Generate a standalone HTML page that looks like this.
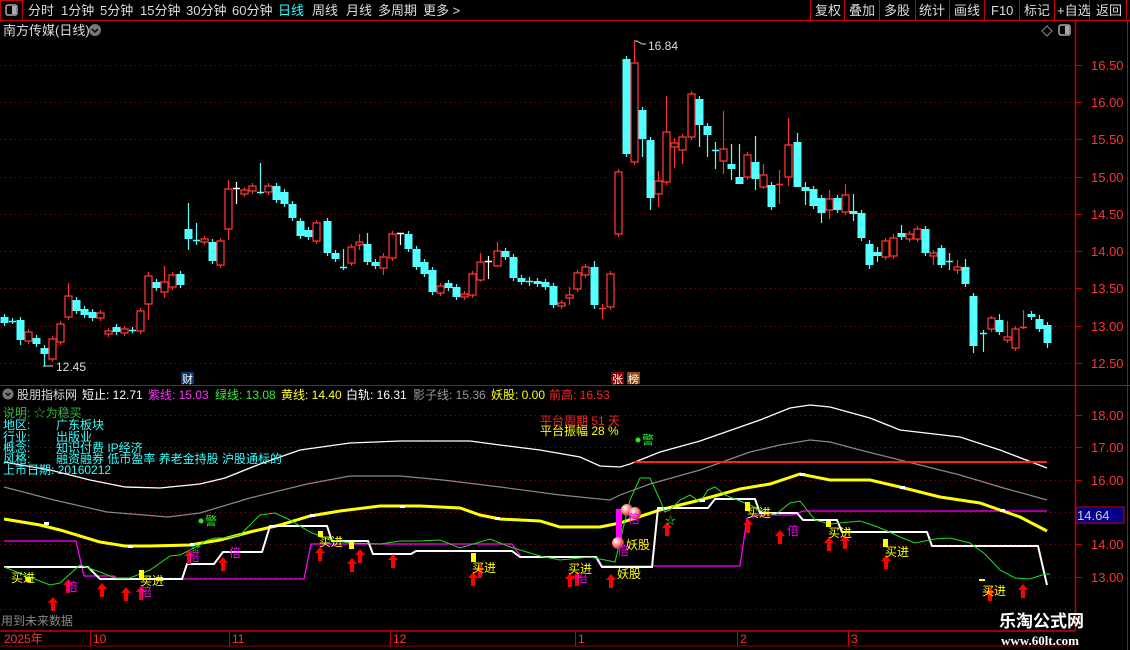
<!DOCTYPE html>
<html><head><meta charset="utf-8">
<style>
html,body{margin:0;padding:0;background:#000;width:1130px;height:650px;overflow:hidden}
body{font-family:"Liberation Sans","Noto Sans CJK SC",sans-serif;font-size:12px;position:relative}
.t{position:absolute;white-space:nowrap;line-height:13px}
svg{position:absolute;left:0;top:0}
</style></head><body>
<svg width="1130" height="650" xmlns="http://www.w3.org/2000/svg" font-family="Liberation Sans, Noto Sans CJK SC, sans-serif">
<!-- top bar -->
<line x1="0" y1="20.5" x2="1130" y2="20.5" stroke="#c00" />
<rect x="0.5" y="0.5" width="22" height="20" fill="none" stroke="#c00"/>
<rect x="6" y="5" width="11" height="10" rx="2" fill="none" stroke="#aaa" stroke-width="1.5"/><rect x="12" y="6" width="4" height="8" fill="#aaa"/>
<g stroke="#c00"><line x1="810.5" y1="0" x2="810.5" y2="20"/><line x1="844.5" y1="0" x2="844.5" y2="20"/><line x1="879.5" y1="0" x2="879.5" y2="20"/><line x1="915.5" y1="0" x2="915.5" y2="20"/><line x1="949.5" y1="0" x2="949.5" y2="20"/><line x1="984.5" y1="0" x2="984.5" y2="20"/><line x1="1019.5" y1="0" x2="1019.5" y2="20"/><line x1="1054.5" y1="0" x2="1054.5" y2="20"/><line x1="1089.5" y1="0" x2="1089.5" y2="20"/><line x1="1126.5" y1="0" x2="1126.5" y2="20"/></g>
<g font-size="13" fill="#ddd">
<text x="28" y="15">分时</text><text x="61" y="15">1分钟</text><text x="100" y="15">5分钟</text><text x="140" y="15">15分钟</text><text x="186" y="15">30分钟</text><text x="232" y="15">60分钟</text><text x="278" y="15" fill="#3ff">日线</text><text x="312" y="15">周线</text><text x="346" y="15">月线</text><text x="378" y="15">多周期</text><text x="423" y="15">更多 &gt;</text>
<text x="815" y="15">复权</text><text x="849" y="15">叠加</text><text x="884" y="15">多股</text><text x="919" y="15">统计</text><text x="954" y="15">画线</text><text x="991" y="15">F10</text><text x="1024" y="15">标记</text><text x="1057" y="15">+自选</text><text x="1096" y="15">返回</text>
<text x="3" y="35">南方传媒(日线)</text></g>
<circle cx="95" cy="30" r="6" fill="#777"/><path d="M92 29l3 3 3-3" stroke="#000" stroke-width="1.5" fill="none"/>
<path d="M1047 26l5 5-5 5-5-5z" fill="none" stroke="#888"/>
<rect x="1059" y="25" width="11" height="10" rx="2" fill="none" stroke="#aaa" stroke-width="1.5"/><rect x="1065" y="26" width="4" height="8" fill="#aaa"/>
<!-- axis -->
<line x1="1075.5" y1="20" x2="1075.5" y2="631" stroke="#c00" stroke-width="1.5"/>
<line x1="1127.5" y1="20" x2="1127.5" y2="650" stroke="#c00"/>
<line x1="0" y1="385.5" x2="1130" y2="385.5" stroke="#c00"/>
<g stroke="#900" stroke-dasharray="1 4">
<line x1="0" y1="65.5" x2="1075" y2="65.5"/><line x1="0" y1="102.5" x2="1075" y2="102.5"/><line x1="0" y1="139.5" x2="1075" y2="139.5"/><line x1="0" y1="177.5" x2="1075" y2="177.5"/><line x1="0" y1="214.5" x2="1075" y2="214.5"/><line x1="0" y1="251.5" x2="1075" y2="251.5"/><line x1="0" y1="288.5" x2="1075" y2="288.5"/><line x1="0" y1="326.5" x2="1075" y2="326.5"/><line x1="0" y1="363.5" x2="1075" y2="363.5"/>
<line x1="0" y1="415.5" x2="1075" y2="415.5"/><line x1="0" y1="447.5" x2="1075" y2="447.5"/><line x1="0" y1="480.5" x2="1075" y2="480.5"/><line x1="0" y1="512.5" x2="1075" y2="512.5"/><line x1="0" y1="544.5" x2="1075" y2="544.5"/><line x1="0" y1="577.5" x2="1075" y2="577.5"/><line x1="0" y1="609.5" x2="1075" y2="609.5"/>
</g>
<g stroke="#c00"><line x1="1075" y1="65.5" x2="1082" y2="65.5"/><line x1="1075" y1="102.5" x2="1082" y2="102.5"/><line x1="1075" y1="139.5" x2="1082" y2="139.5"/><line x1="1075" y1="177.5" x2="1082" y2="177.5"/><line x1="1075" y1="214.5" x2="1082" y2="214.5"/><line x1="1075" y1="251.5" x2="1082" y2="251.5"/><line x1="1075" y1="288.5" x2="1082" y2="288.5"/><line x1="1075" y1="326.5" x2="1082" y2="326.5"/><line x1="1075" y1="363.5" x2="1082" y2="363.5"/><line x1="1075" y1="415.5" x2="1082" y2="415.5"/><line x1="1075" y1="447.5" x2="1082" y2="447.5"/><line x1="1075" y1="480.5" x2="1082" y2="480.5"/><line x1="1075" y1="544.5" x2="1082" y2="544.5"/><line x1="1075" y1="577.5" x2="1082" y2="577.5"/></g>
<g fill="#f33" font-size="13">
<text x="1091" y="70">16.50</text><text x="1091" y="107">16.00</text><text x="1091" y="144">15.50</text><text x="1091" y="182">15.00</text><text x="1091" y="219">14.50</text><text x="1091" y="256">14.00</text><text x="1091" y="293">13.50</text><text x="1091" y="331">13.00</text><text x="1091" y="368">12.50</text>
<text x="1091" y="420">18.00</text><text x="1091" y="452">17.00</text><text x="1091" y="485">16.00</text><text x="1091" y="549">14.00</text><text x="1091" y="582">13.00</text></g>
<rect x="1076" y="507" width="48" height="16" fill="#00008b" stroke="#c00"/>
<text x="1077" y="520" fill="#ccc" font-size="13">14.64</text>
<g id="candles"></g>
<g fill="#ddd" font-size="12"><text x="648" y="50">16.84</text><text x="56" y="371">12.45</text></g>
<path d="M634 41h3l5 3h4M43 366h10" stroke="#ddd" fill="none"/>
<rect x="181" y="372" width="13" height="12" fill="#0a3a6a"/><text x="182" y="383" fill="#fff" font-size="11">财</text>
<rect x="611" y="372" width="13" height="12" fill="#800"/><text x="612" y="383" fill="#fff" font-size="11">张</text>
<rect x="627" y="372" width="13" height="12" fill="#8a4a10"/><text x="628" y="383" fill="#fff" font-size="11">榜</text>
<!-- indicator lines -->
<polyline fill="none" stroke="#fff" stroke-width="1.3" points="4,462 50,470 90,480 125,487 160,488 200,484 225,478 260,464 300,450 350,443 400,441 470,441 500,445 540,450 580,457 600,466 620,467 630,464 660,452 700,441 760,420 790,408 810,405 830,407 870,418 900,430 960,437 1000,450 1047,468"/>
<polyline fill="none" stroke="#888" stroke-width="1.2" points="4,487 54,500 107,512 168,517 200,513 250,498 307,484 350,476 400,476 443,480 500,487 560,495 610,500 620,495 650,484 700,470 750,452 780,445 810,440 830,442 860,450 900,460 960,475 1000,487 1047,500"/>
<line x1="634" y1="462" x2="1047" y2="462" stroke="#f22" stroke-width="2"/>
<polyline fill="none" stroke="#f0f" stroke-width="1.3" points="4,541 76,541 84,576 114,576 118,579 304,579 311,544 368,544 512,544 521,557 597,557 602,566 740,566 747,518 760,515 793,515 803,511 1047,511"/>
<polyline fill="none" stroke="#ff0" stroke-width="3" points="4,519 40,525 60,530 100,542 125,546 150,546 190,545 220,540 250,532 280,525 310,516 340,511 380,506 420,506 460,508 480,515 500,519 540,521 560,527 600,527 620,523 660,510 700,500 740,489 770,484 800,474 830,480 870,480 900,487 940,497 980,503 1000,510 1020,517 1047,531"/>
<polyline fill="none" stroke="#fff" stroke-width="2" points="4,567 82,567 88,567 100,579 182,579 187,564 214,564 223,552 262,552 270,526 327,526 332,541 368,541 373,554 411,554 416,551 512,551 520,557 596,557 602,567 652,567 658,508 708,508 715,499 755,499 760,513 797,513 803,520 837,520 842,532 927,532 932,546 1038,546 1047,585"/>
<polyline fill="none" stroke="#2d2" stroke-width="1" points="4,567 50,585 60,583 80,565 100,572 115,578 130,578 150,570 170,556 180,555 200,545 205,541 215,538 225,538 240,535 260,515 275,513 290,520 310,532 330,540 350,543 380,544 400,541 420,541 440,540 460,548 490,539 510,547 540,556 560,560 590,557 615,562 630,500 640,478 650,478 660,500 665,512 670,510 680,500 690,495 700,502 708,490 715,487 725,495 735,499 750,505 760,510 775,515 790,503 800,501 815,520 830,524 860,521 875,526 885,530 900,537 915,543 935,539 950,538 970,543 985,554 1000,570 1015,578 1030,579 1045,574 1050,574"/>
<g fill="#fff"><rect x="44" y="522" width="5" height="3"/><rect x="128" y="545" width="5" height="3"/><rect x="190" y="543" width="5" height="3"/><rect x="310" y="514" width="5" height="3"/><rect x="400" y="505" width="5" height="3"/><rect x="495" y="517" width="5" height="3"/><rect x="700" y="499" width="5" height="3"/><rect x="800" y="473" width="5" height="3"/><rect x="900" y="486" width="5" height="3"/><rect x="1000" y="509" width="5" height="3"/></g>
<g fill="#ff0"><rect x="139" y="570" width="5" height="9"/><rect x="26" y="577" width="5" height="5"/><rect x="318" y="531" width="5" height="6"/><rect x="349" y="542" width="5" height="7"/><rect x="471" y="553" width="5" height="9"/><rect x="745" y="502" width="5" height="9"/><rect x="826" y="521" width="5" height="6"/><rect x="883" y="539" width="5" height="8"/><rect x="979" y="579" width="6" height="2"/></g>
<rect x="616" y="509" width="6" height="30" fill="#f0f"/>
<defs><radialGradient id="b" cx="0.35" cy="0.35" r="0.7"><stop offset="0" stop-color="#fff"/><stop offset="0.5" stop-color="#f88"/><stop offset="1" stop-color="#a22"/></radialGradient></defs>
<circle cx="627" cy="510" r="6" fill="url(#b)"/><circle cx="635" cy="513" r="6" fill="url(#b)"/><circle cx="618" cy="543" r="6" fill="url(#b)"/>
<g id="arrows" fill="#f00"></g>
<g font-size="12">
<g fill="#ff0"><text x="11" y="582">买进</text><text x="140" y="585">买进</text><text x="319" y="546">买进</text><text x="472" y="572">买进</text><text x="568" y="573">买进</text><text x="747" y="517">买进</text><text x="828" y="537">买进</text><text x="885" y="556">买进</text><text x="982" y="595">买进</text><text x="617" y="578">妖股</text><text x="626" y="549">妖股</text></g>
<g fill="#f0f"><text x="66" y="591">倍</text><text x="140" y="596">倍</text><text x="188" y="561">倍</text><text x="229" y="557">倍</text><text x="576" y="582">倍</text><text x="617" y="555">倍</text><text x="628" y="523">倍</text><text x="787" y="535">倍</text></g>
<g fill="#2e2"><circle cx="201" cy="521" r="2.5"/><text x="205" y="525">警</text><circle cx="638" cy="440" r="2.5"/><text x="642" y="444">警</text><text x="665" y="524" font-size="11">☆</text><text x="190" y="551" font-size="11">☆</text></g>
</g>
<!-- indicator header -->
<circle cx="8" cy="394" r="5.5" fill="#777"/><path d="M5.5 393l2.5 2.5 2.5-2.5" stroke="#000" stroke-width="1.3" fill="none"/>
<g font-size="12"><text x="17" y="399" fill="#ddd">股朋指标网</text><text x="82" y="399" fill="#fff">短止: 12.71</text><text x="148" y="399" fill="#f3f">紫线: 15.03</text><text x="215" y="399" fill="#3e3">绿线: 13.08</text><text x="281" y="399" fill="#ff3">黄线: 14.40</text><text x="346" y="399" fill="#fff">白轨: 16.31</text><text x="413" y="399" fill="#999">影子线: 15.36</text><text x="491" y="399" fill="#ff0">妖股: 0.00</text><text x="549" y="399" fill="#f22">前高: 16.53</text></g>
<g font-size="12"><text x="3" y="417" fill="#3b3">说明: ☆为稳买</text>
<g fill="#3ff"><text x="3" y="429">地区:</text><text x="56" y="429">广东板块</text><text x="3" y="441">行业:</text><text x="56" y="441">出版业</text><text x="3" y="452">概念:</text><text x="56" y="452">知识付费 IP经济</text><text x="3" y="463">风格:</text><text x="56" y="463">融资融券 低市盈率 养老金持股 沪股通标的</text><text x="3" y="474">上市日期: 20160212</text></g>
<text x="540" y="425" fill="#f22">平台周期 51 天</text><text x="540" y="435" fill="#ff0">平台振幅 28 %</text></g>
<!-- bottom -->
<text x="1" y="625" fill="#888" font-size="12">用到未来数据</text>
<line x1="0" y1="631" x2="1075" y2="631" stroke="#c00" stroke-width="1.5"/>
<line x1="0" y1="646" x2="1075" y2="646" stroke="#900"/>
<g stroke="#c00"><line x1="90.5" y1="631" x2="90.5" y2="646"/><line x1="229.5" y1="631" x2="229.5" y2="646"/><line x1="390.5" y1="631" x2="390.5" y2="646"/><line x1="575.5" y1="631" x2="575.5" y2="646"/><line x1="737.5" y1="631" x2="737.5" y2="646"/><line x1="848.5" y1="631" x2="848.5" y2="646"/></g>
<g fill="#f33" font-size="12"><text x="4" y="643">2025年</text><text x="93" y="643">10</text><text x="232" y="643">11</text><text x="393" y="643">12</text><text x="578" y="643">1</text><text x="740" y="643">2</text><text x="851" y="643">3</text></g>
<text x="999" y="627" fill="#fff" font-size="17" font-weight="bold">乐淘公式网</text>
<text x="1001" y="645" fill="#fff" font-size="13" font-family="Liberation Serif, serif" font-weight="bold">www.60lt.com</text>
</svg>
<script>
var d=[[4,317,323,'c'],[12,321,321,'c'],[20,320,340,'c',0,345],[28,332,341,'r'],[36,338,344,'c'],[44,348,354,'c',0,366],[52,339,359,'r'],[60,324,342,'r'],[68,296,317,'r',283],[76,300,311,'c'],[84,309,315,'c'],[92,312,318,'c'],[100,313,318,'r'],[108,331,334,'r'],[116,327,332,'c'],[124,329,333,'r'],[132,330,330,'c'],[140,311,331,'r'],[148,276,304,'r',272,320],[156,282,288,'c'],[164,282,292,'r',266,298],[172,275,287,'r'],[180,274,285,'c'],[188,229,239,'c',203,250],[196,240,240,'c',223,245],[204,239,242,'r'],[212,242,261,'c'],[220,241,265,'r'],[228,189,229,'r',180,240],[236,188,188,'w',182,204],[244,190,194,'r'],[252,186,191,'r'],[260,192,192,'c',163,194],[268,186,192,'r'],[276,186,200,'c'],[284,192,204,'c'],[292,204,218,'c'],[300,221,236,'c'],[308,230,237,'c'],[316,223,241,'r'],
[327,221,253,'c'],[335,253,259,'c'],[343,267,267,'c',249,270],[351,247,263,'r'],[359,242,245,'r',234,250],[367,244,262,'c',233,265],[375,262,266,'c'],[383,257,268,'r',253,275],[392,234,258,'r'],[400,233,233,'w',233,245],[408,234,249,'c'],[416,249,267,'c'],[424,262,274,'c'],[432,270,292,'c'],[440,286,293,'r'],[448,283,288,'c'],[456,287,297,'c'],[464,294,297,'r'],[472,274,295,'r'],[480,262,280,'r',253,282],[488,261,261,'w',256,279],[497,251,266,'r',242,266],[505,251,257,'c'],[513,257,278,'c'],[521,278,282,'c'],[529,281,281,'c',277,286],[537,281,284,'c'],[545,282,287,'c'],[553,286,305,'c'],[561,303,306,'r'],[569,295,298,'r',287,305],[577,273,289,'r'],[585,267,275,'r'],[594,267,305,'c',261,309],[602,308,308,'r',304,319],[610,274,307,'r'],[618,172,234,'r'],
[626,59,154,'c'],[634,63,162,'r',42],[642,110,139,'c',0,157],[650,140,198,'c',0,210],[658,181,194,'r',171,207],[666,132,182,'r',96],[674,143,147,'r',138,168],[682,137,150,'r',0,164],[691,94,137,'r'],[699,99,125,'c',0,147],[707,126,135,'c',0,157],[715,150,150,'c',142,169],[723,149,161,'r',111,174],[731,164,169,'c',144,180],[739,177,184,'c',144,184],[747,155,177,'r'],[755,162,179,'c',136,190],[763,175,187,'r',164,189],[771,185,207,'c'],[779,184,184,'r',170,204],[788,145,177,'r',118,186],[797,142,187,'c',133,187],[805,187,191,'c',182,205],[813,189,206,'c'],[821,198,213,'c',0,223],[829,199,210,'r',190,219],[837,198,210,'c'],[845,195,212,'r',184],[853,211,214,'c',194,221],[861,213,238,'c'],[869,244,265,'c',240,269],[877,252,256,'c',247,262],[885,241,257,'r'],[893,238,256,'r',234],[901,233,237,'c',225,240],[909,234,239,'r'],[917,229,239,'r'],[925,229,253,'c',226],[933,253,256,'r',0,265],[941,248,265,'c'],[949,261,261,'c',253,270],[957,267,270,'r',260,274],[965,267,284,'c',259],[973,296,346,'c',0,353],[983,333,333,'c',330,352],[991,318,329,'r',316,332],[999,320,332,'c',314,335],[1007,337,340,'r',321],[1015,329,348,'r'],[1023,327,327,'r',310,329],[1031,314,317,'c',311,320],[1039,319,329,'c',315],[1047,325,343,'c',322,348]];
var col={c:'#54ffff',r:'#ff3232',w:'#ffffff'},s='';
d.forEach(function(k){var x=k[0],t=k[1],b=k[2],c=col[k[3]];var wt=k[4]||t-3,wb=k[5]||b+3;
s+='<line x1="'+(x+.5)+'" y1="'+wt+'" x2="'+(x+.5)+'" y2="'+wb+'" stroke="'+c+'" stroke-width="1.2"/>';
if(b-t<1){s+='<line x1="'+(x-3)+'" y1="'+(t+.5)+'" x2="'+(x+4)+'" y2="'+(t+.5)+'" stroke="'+c+'" stroke-width="1.5"/>';}
else if(k[3]=='r'){s+='<rect x="'+(x-3)+'" y="'+t+'" width="7" height="'+(b-t)+'" fill="#000" stroke="'+c+'" stroke-width="1.3"/>';}
else s+='<rect x="'+(x-3.5)+'" y="'+t+'" width="8" height="'+(b-t)+'" fill="'+c+'"/>';});
document.getElementById('candles').innerHTML=s;
var a=[[53,597],[68,579],[102,583],[126,587],[141,586],[189,550],[223,557],[320,547],[352,558],[360,549],[393,554],[473,572],[480,564],[570,573],[577,572],[611,574],[667,522],[748,519],[780,530],[829,537],[845,535],[886,555],[990,587],[1023,584]],q='';
a.forEach(function(p){var x=p[0],y=p[1];q+='<path d="M'+x+' '+y+'l-5 6h3v8h4v-8h3z"/>';});
document.getElementById('arrows').innerHTML=q;
</script>
</body></html>
